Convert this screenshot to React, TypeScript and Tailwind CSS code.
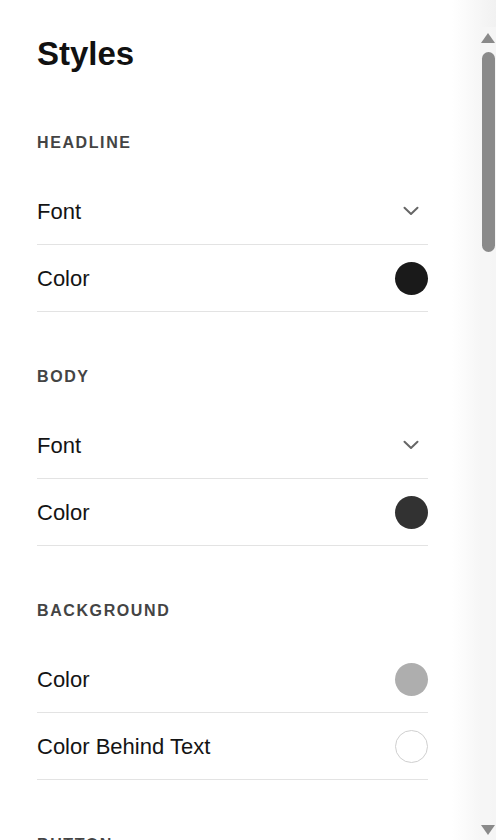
import type { ReactNode } from "react";

type Row =
  | { label: string; kind: "select" }
  | { label: string; kind: "color"; swatch: string; outlined?: boolean };

type Section = { title: string; rows: Row[] };

const SECTIONS: Section[] = [
  {
    title: "Headline",
    rows: [
      { label: "Font", kind: "select" },
      { label: "Color", kind: "color", swatch: "bg-[#1a1a1a]" },
    ],
  },
  {
    title: "Body",
    rows: [
      { label: "Font", kind: "select" },
      { label: "Color", kind: "color", swatch: "bg-[#323232]" },
    ],
  },
  {
    title: "Background",
    rows: [
      { label: "Color", kind: "color", swatch: "bg-[#aeaeae]" },
      { label: "Color Behind Text", kind: "color", swatch: "bg-white", outlined: true },
    ],
  },
  {
    title: "Button",
    rows: [
      { label: "Font", kind: "select" },
      { label: "Color", kind: "color", swatch: "bg-[#1a1a1a]" },
    ],
  },
];

function Chevron() {
  return (
    <svg width="16" height="10" viewBox="0 0 16 10" fill="none" className="mr-[9px]">
      <polyline
        points="1.5,1.8 8,8 14.5,1.8"
        stroke="#666666"
        strokeWidth="2"
        strokeLinecap="round"
        strokeLinejoin="round"
      />
    </svg>
  );
}

function SettingRow({ row }: { row: Row }) {
  let control: ReactNode;
  if (row.kind === "select") {
    control = <Chevron />;
  } else {
    control = (
      <span
        className={`size-[33px] rounded-full ${row.swatch} ${
          row.outlined ? "border border-[#cfcfcf]" : ""
        }`}
      />
    );
  }
  return (
    <button
      type="button"
      className="flex h-[67px] w-full shrink-0 items-center justify-between border-b border-[#e3e3e3] text-left"
    >
      <span className="pt-px text-[22px] leading-none text-[#141414]">{row.label}</span>
      {control}
    </button>
  );
}

// drawn scrollbar, the panel scrolls in the real app
function ScrollBar() {
  return (
    <div className="flex w-[19px] shrink-0 flex-col bg-[#f7f7f7]/70 pl-[4px]">
      <span className="mt-[6px] h-0 w-0 border-x-[7px] border-b-[10px] border-x-transparent border-b-[#8a8a8a]" />
      <span className="ml-px mt-[9px] h-[200px] w-[13px] rounded-full bg-[#8a8a8a]" />
      <span className="mb-[5px] mt-auto h-0 w-0 border-x-[7px] border-t-[10px] border-x-transparent border-t-[#8a8a8a]" />
    </div>
  );
}

export default function App() {
  return (
    <div className="flex h-[840px] w-[496px] flex-col overflow-hidden bg-[linear-gradient(to_right,#ffffff_calc(100%-44px),#f1f1f1)] font-['Liberation_Sans',Arial,sans-serif]">
      <div className="h-[27px] shrink-0" />
      <div className="flex min-h-0 flex-1">
        <div className="min-w-0 flex-1 overflow-hidden">
          <div className="w-[391px] pl-[37px] box-content">
            <h1 className="pt-[7px] text-[33px] font-bold leading-[40px] text-[#111111]">
              Styles
            </h1>
            {SECTIONS.map((s, i) => (
              <section key={s.title} className={i === 0 ? "mt-[57px]" : "mt-[53px]"}>
                <h2 className="mb-[23px] text-[16px] font-bold uppercase leading-[24px] tracking-[0.1em] text-[#444444]">
                  {s.title}
                </h2>
                {s.rows.map((r) => (
                  <SettingRow key={r.label} row={r} />
                ))}
              </section>
            ))}
          </div>
        </div>
        <ScrollBar />
      </div>
    </div>
  );
}
